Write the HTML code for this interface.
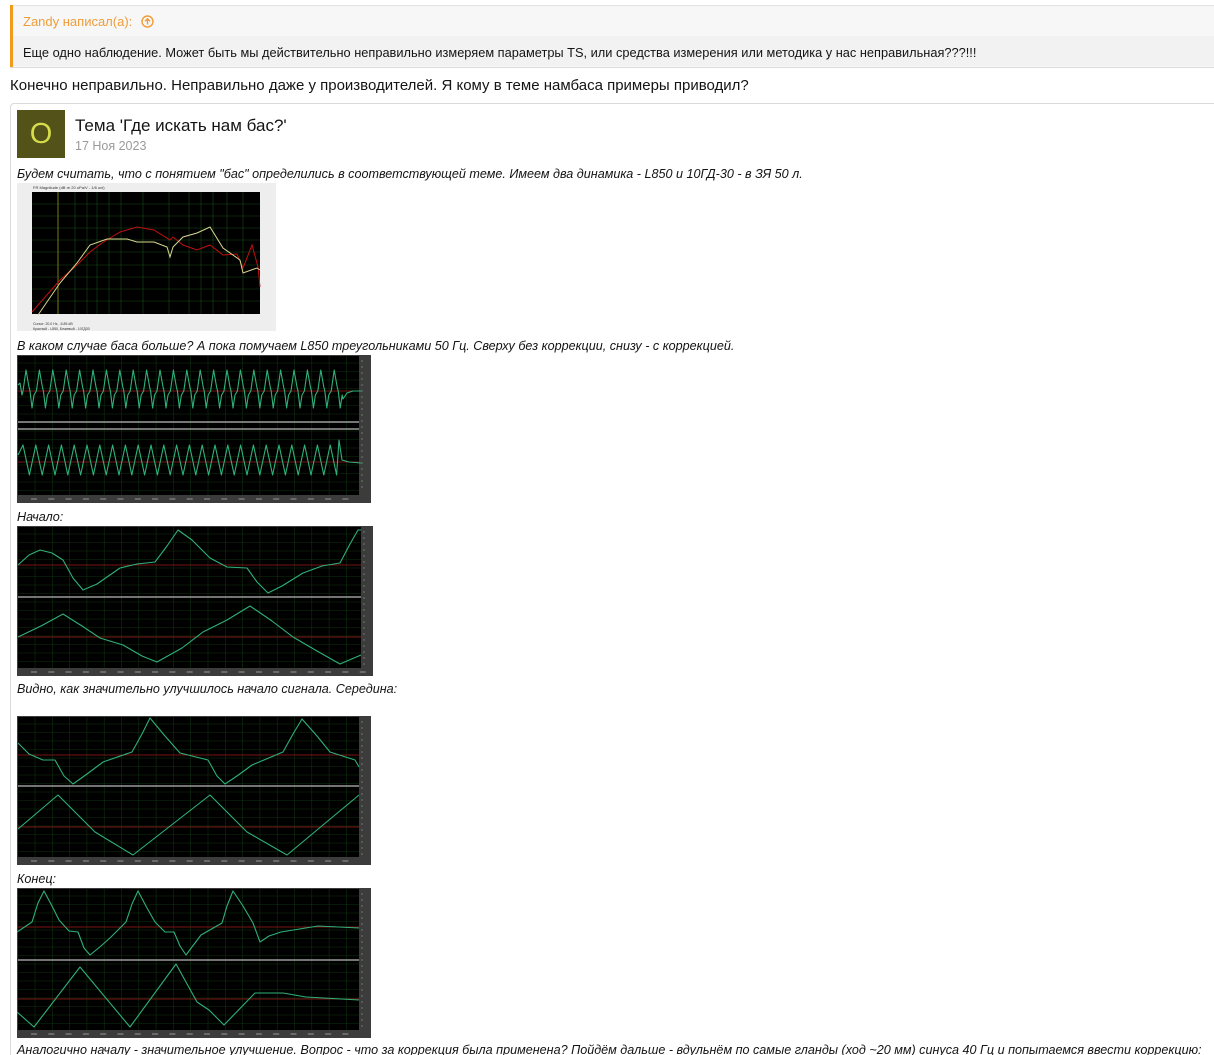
<!DOCTYPE html>
<html><head><meta charset="utf-8">
<style>
html,body{margin:0;padding:0;background:#fff;width:1214px;height:1055px;overflow:hidden;font-family:"Liberation Sans","DejaVu Sans",sans-serif;color:#141414;position:relative}
.a{position:absolute;white-space:nowrap}
.it{font-style:italic;font-size:12.6px;color:#141414}
svg{position:absolute;display:block}
</style></head><body>
<div class="a" style="left:10px;top:5px;width:1204px;height:61px;border-top:1px solid #e2e2e2;border-bottom:1px solid #dcdcdc;background:#f7f7f7"></div>
<div class="a" style="left:10px;top:36px;width:1204px;height:30px;background:#f2f2f2"></div>
<div class="a" style="left:10px;top:5px;width:3px;height:62px;background:#f39a1c"></div>
<div class="a" style="left:23px;top:14px;font-size:13px;color:#ef9d3a">Zandy написал(а):
<svg style="position:relative;display:inline-block;vertical-align:-2px;margin-left:5px" width="13" height="13" viewBox="0 0 13 13"><circle cx="6.5" cy="6.5" r="5.5" fill="none" stroke="#ef9d3a" stroke-width="1.4"/><path d="M6.5 9.5V3.8M4 6.2L6.5 3.7 9 6.2" fill="none" stroke="#ef9d3a" stroke-width="1.4"/></svg></div>
<div class="a" style="left:23px;top:45px;font-size:12.8px;color:#141414">Еще одно наблюдение. Может быть мы действительно неправильно измеряем параметры TS, или средства измерения или методика у нас неправильная???!!!</div>
<div class="a" style="left:10px;top:77px;font-size:15px;color:#141414">Конечно неправильно. Неправильно даже у производителей. Я кому в теме намбаса примеры приводил?</div>
<div class="a" style="left:10px;top:103px;width:1210px;height:960px;border-left:1px solid #dadada;border-top:1px solid #dadada;border-top-left-radius:4px"></div>
<div class="a" style="left:17px;top:110px;width:48px;height:48px;background:#525219;color:#d6dc4a;font-size:29px;line-height:48px;text-align:center">O</div>
<div class="a" style="left:75px;top:116px;font-size:17px;color:#141414">Тема 'Где искать нам бас?'</div>
<div class="a" style="left:75px;top:139px;font-size:12.5px;color:#9a9a9a">17 Ноя 2023</div>
<div class="a it" style="left:17px;top:167px">Будем считать, что с понятием "бас" определились в соответствующей теме. Имеем два динамика - L850 и 10ГД-30 - в ЗЯ 50 л.</div>
<div class="a it" style="left:17px;top:339px">В каком случае баса больше? А пока помучаем L850 треугольниками 50 Гц. Сверху без коррекции, снизу - с коррекцией.</div>
<div class="a it" style="left:17px;top:510px">Начало:</div>
<div class="a it" style="left:17px;top:682px">Видно, как значительно улучшилось начало сигнала. Середина:</div>
<div class="a it" style="left:17px;top:872px">Конец:</div>
<div class="a it" style="left:17px;top:1043px">Аналогично началу - значительное улучшение. Вопрос - что за коррекция была применена? Пойдём дальше - вдульнём по самые гланды (ход ~20 мм) синуса 40 Гц и попытаемся ввести коррекцию:</div>

<svg id="fr" style="left:17px;top:183px" width="259" height="148" viewBox="0 0 259 148">
<rect width="259" height="148" fill="#eeeeee"/>
<rect x="15" y="9" width="228" height="122" fill="#000"/>
<g stroke="#174a17" stroke-width="0.6">
<path d="M15 21H243M15 33H243M15 45H243M15 57H243M15 69H243M15 82H243M15 94H243M15 106H243M15 118H243"/>
<path d="M41 9V131M58 9V131M70 9V131M80 9V131M92 9V131M104 9V131M126 9V131M152 9V131M172 9V131M184 9V131M196 9V131M210 9V131M226 9V131"/>
</g>
<path d="M41 9V131" stroke="#7a7a10" stroke-width="1"/>
<path d="M15 129L43 97L60 82L73 69L85 60L103 49L120 44L137 47L153 57L156 54L166 62L180 67L193 62L206 72L220 71L226 85L235 62L241 84L243 104" fill="none" stroke="#c01010" stroke-width="1"/>
<path d="M21 132L43 100L60 80L73 62L90 56L110 56L120 59L137 59L150 64L153 74L156 64L166 54L180 50L193 44L206 65L223 77L226 90L240 85L243 87" fill="none" stroke="#d8d890" stroke-width="1"/>
<text x="16" y="6" font-size="4" fill="#333" font-family="Liberation Sans">FR Magnitude (dB re 20 uPa/V - 1/6 oct)</text>
<text x="16" y="142" font-size="3.5" fill="#333" font-family="Liberation Sans">Cursor: 20.0 Hz, -5.85 dB</text>
<text x="16" y="147" font-size="3.5" fill="#333" font-family="Liberation Sans">Красный - L850, Бежевый - 10ГД30</text>
</svg>

<svg id="s1" style="left:17px;top:355px" width="354" height="148"></svg>
<svg id="s2" style="left:17px;top:526px" width="356" height="150"></svg>
<svg id="s3" style="left:17px;top:716px" width="354" height="149"></svg>
<svg id="s4" style="left:17px;top:888px" width="354" height="150"></svg>

<script>
function scope(id,w,h,c1,c2,divs,p1,p2){
  var s=document.getElementById(id),o='';
  var pw=w-12;
  o+='<rect width="'+w+'" height="'+h+'" fill="#3c3c3c"/>';
  o+='<rect x="1" y="1" width="'+(pw-1)+'" height="'+(h-9)+'" fill="#000"/>';
  var g='';
  for(var x=18;x<pw;x+=17.3)g+='M'+x.toFixed(1)+' 1V'+(h-8);
  for(var y=8;y<h-8;y+=8.5)g+='M1 '+y.toFixed(1)+'H'+pw;
  o+='<path d="'+g+'" stroke="#0f300f" stroke-width="0.6"/>';
  o+='<path d="M1 '+c1+'H'+pw+'M1 '+c2+'H'+pw+'" stroke="#7a1414" stroke-width="1"/>';
  divs.forEach(function(d){o+='<path d="M1 '+d+'H'+pw+'" stroke="#9a9a9a" stroke-width="1.5"/>';});
  var t='';
  for(var y=6;y<h-10;y+=6)t+='M'+(pw+2)+' '+y+'h2';
  o+='<path d="'+t+'" stroke="#aaa" stroke-width="0.6"/>';
  var b='';for(var x=14;x<pw;x+=17.3)b+='M'+x.toFixed(1)+' '+(h-4)+'h6';
  o+='<path d="'+b+'" stroke="#999" stroke-width="1"/>';
  function pl(p){return '<polyline points="'+p.map(function(q){return q[0]+','+q[1]}).join(' ')+'" fill="none" stroke="#2fb07a" stroke-width="1.1" stroke-linejoin="round"/>';}
  o+=pl(p1)+pl(p2);
  s.innerHTML=o;
}
var a=[],b=[];
a.push([1,30],[3,28],[5,40]);
for(var x=6;x<323;x+=13.4){a.push([x,36],[x+3,15],[x+6,32],[x+7,36],[x+9,53],[x+11,40]);}
a.push([326,44],[330,38],[336,36],[344,36]);
b.push([1,100]);
for(var x=3;x<318;x+=12.8){b.push([x+3,90],[x+9.4,120]);}
b.push([322,85],[325,105],[332,107],[344,108]);
scope('s1',354,148,36,107,[67,74],a,b);
scope('s2',356,150,39,111,[71],
[[1,39],[12,29],[23,24],[35,27],[46,34],[56,52],[66,64],[80,58],[103,42],[120,38],[138,36],[150,20],[161,4],[175,14],[193,32],[210,41],[230,42],[240,56],[251,67],[265,60],[286,47],[305,40],[323,37],[333,18],[341,4],[344,4]],
[[1,111],[24,100],[46,88],[65,100],[83,112],[106,119],[125,130],[140,136],[165,122],[186,106],[210,94],[233,80],[255,95],[276,111],[300,125],[323,138],[344,129]]);
scope('s3',354,149,39,111,[70],
[[1,27],[12,38],[26,44],[38,44],[47,60],[56,68],[70,58],[86,46],[115,36],[125,18],[133,2],[148,20],[163,37],[191,44],[200,60],[208,68],[220,60],[235,49],[266,36],[276,18],[285,3],[300,20],[313,36],[338,44],[342,51]],
[[1,113],[41,79],[78,116],[116,139],[193,79],[230,116],[270,139],[342,79]]);
scope('s4',354,150,39,111,[72],
[[0,44],[15,34],[21,15],[27,3],[35,18],[42,32],[52,43],[61,44],[67,60],[73,67],[84,58],[94,49],[109,34],[115,16],[121,3],[130,20],[138,34],[148,44],[157,44],[163,58],[169,67],[184,47],[205,35],[210,18],[216,3],[226,18],[236,35],[243,54],[252,48],[264,44],[301,38],[342,40]],
[[0,124],[17,139],[63,79],[113,139],[159,76],[180,114],[192,122],[207,137],[238,105],[266,105],[289,109],[342,112]]);
</script>
</body></html>
